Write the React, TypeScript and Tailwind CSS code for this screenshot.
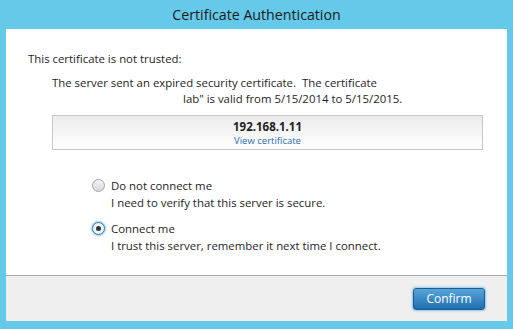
const Radio = ({ checked }: { checked?: boolean }) => (
  <span
    className={`mt-[2px] flex h-[13px] w-[13px] shrink-0 items-center justify-center rounded-full border ${
      checked
        ? "border-[#3c7fb1] bg-[#eaf4fb] shadow-[0_0_2px_1px_#9ccbea]"
        : "border-[#a3a3a3] bg-gradient-to-b from-[#f4f4f4] to-[#d8d8d8]"
    }`}
  >
    {checked && <span className="h-[5px] w-[5px] rounded-full bg-[#333]" />}
  </span>
);

const App = () => {
  return (
    <div
      className="flex h-[329px] w-[513px] flex-col bg-[#65c9e9] px-[6px] pb-[8px] text-[11.4px] text-[#1e1e1e]"
      style={{ fontFamily: '"Open Sans", "Noto Sans", sans-serif' }}
    >
      <div className="flex h-[29px] shrink-0 items-center justify-center text-[14.2px] text-[#1b1b1b]">
        Certificate Authentication
      </div>

      <div className="flex flex-1 flex-col bg-white">
        <div className="flex flex-1 flex-col pt-[21px]">
          <p className="pl-[22px] leading-[17px]">This certificate is not trusted:</p>

          <div className="pl-[46px] pt-[8px]">
            <p className="leading-[16px]">
              The server sent an expired security certificate.&nbsp; The certificate
            </p>
            <p className="pl-[131px] leading-[16px]">
              lab" is valid from 5/15/2014 to 5/15/2015.
            </p>
          </div>

          <div className="ml-[46px] mt-[8px] flex h-[35px] w-[431px] flex-col items-center justify-center border border-[#c8c8c8] bg-gradient-to-b from-[#ececec] to-white">
            <span className="text-[11.5px] font-bold leading-[15px]">192.168.1.11</span>
            <a href="#" className="text-[9.5px] leading-[13px] text-[#2a6bb5]">
              View certificate
            </a>
          </div>

          <div className="flex flex-col gap-[9px] pl-[86px] pt-[27px]">
            <label className="flex gap-[6px]">
              <Radio />
              <span className="flex flex-col">
                <span className="leading-[17px]">Do not connect me</span>
                <span className="leading-[17px]">I need to verify that this server is secure.</span>
              </span>
            </label>
            <label className="flex gap-[6px]">
              <Radio checked />
              <span className="flex flex-col">
                <span className="leading-[17px]">Connect me</span>
                <span className="leading-[17px]">
                  I trust this server, remember it next time I connect.
                </span>
              </span>
            </label>
          </div>
        </div>

        <div className="flex h-[46px] shrink-0 items-center justify-end border-t border-[#a8a8a8] bg-[#efefef] pr-[22px]">
          <button className="h-[22px] w-[72px] rounded-[3px] border border-[#1d5b8c] bg-gradient-to-b from-[#56a6dc] to-[#1f6eae] text-[12px] text-white shadow-[0_0_2px_1px_#8fc6ea]">
            Confirm
          </button>
        </div>
      </div>
    </div>
  );
};

export default App;
